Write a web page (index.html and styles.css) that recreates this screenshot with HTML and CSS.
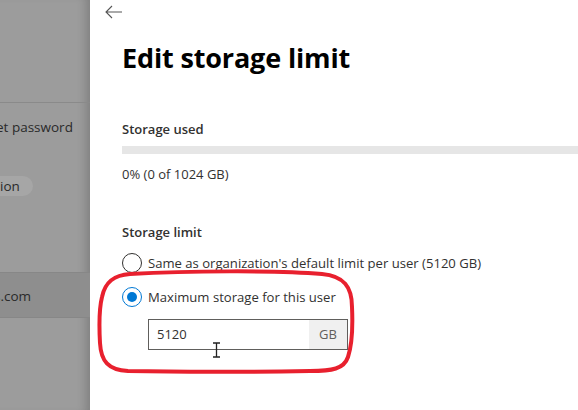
FILE: index.html
```html
<!DOCTYPE html>
<html>
<head>
<meta charset="utf-8">
<link rel="stylesheet" href="styles.css">
</head>
<body>
<div class="screen">
  <aside class="backdrop">
    <div class="bd-top"></div>
    <div class="bd-item bd-pass">et password</div>
    <div class="bd-pill">ion</div>
    <div class="bd-row">s.com</div>
  </aside>
  <main class="panel">
    <button class="back" aria-label="Back">
      <svg width="18" height="14" viewBox="0 0 18 14"><path d="M7 1 L1 7 L7 13 M1 7 H17" fill="none" stroke="#555" stroke-width="1.1"/></svg>
    </button>
    <h1 class="title">Edit storage limit</h1>
    <section class="used">
      <h2 class="label">Storage used</h2>
      <div class="bar"></div>
      <p class="pct">0% (0 of 1024 GB)</p>
    </section>
    <section class="limit">
      <h2 class="label">Storage limit</h2>
      <div class="radio-row">
        <span class="radio"></span>
        <span class="rtext">Same as organization's default limit per user (5120 GB)</span>
      </div>
      <div class="radio-row">
        <span class="radio checked"></span>
        <span class="rtext">Maximum storage for this user</span>
      </div>
      <div class="field">
        <span class="fval">5120</span>
        <span class="fsuffix">GB</span>
      </div>
    </section>
    <svg class="annot" width="262" height="110" viewBox="0 0 262 110">
      <path d="M34 5 C90 2 180 1 226 5 C248 7 256 18 256 38 C257 60 256 76 252 88 C248 100 236 102 214 102 C150 103 80 103 32 102 C12 101 5 92 4 74 C3 56 3 40 6 28 C9 13 18 6 34 5 Z" fill="none" stroke="#e8202e" stroke-width="4"/>
    </svg>
    <svg class="ibeam" width="9" height="16" viewBox="0 0 9 16"><path d="M1 1 H8 M4.5 1 V15 M1 15 H8" stroke="#222" stroke-width="1.3" fill="none"/></svg>
  </main>
</div>
</body>
</html>
```
FILE: styles.css
```css
* { box-sizing: border-box; }
html, body { margin: 0; padding: 0; }
body { width: 578px; height: 410px; overflow: hidden; font-family: "Open Sans", "Noto Sans", sans-serif; background: #fff; }
.screen { display: flex; width: 578px; height: 410px; }
.backdrop {
  width: 90px; flex: none; background: #9c9c9c; color: #2a2a2a; font-size: 13.5px;
  display: flex; flex-direction: column; position: relative; overflow: hidden;
  box-shadow: inset -10px 0 10px -6px rgba(0,0,0,0.18);
}
.bd-top { height: 103px; border-bottom: 1px solid #8a8a8a; flex: none; }
.bd-pass { margin-top: 14px; height: 20px; line-height: 20px; margin-left: -4px; white-space: nowrap; }
.bd-pill { margin-top: 39px; width: 33px; height: 20px; line-height: 20px; background: #a6a6a6; border-radius: 0 10px 10px 0; overflow: hidden; }
.bd-row { margin-top: 76px; height: 46px; line-height: 46px; background: #8e8e8e; border-top: 1px solid #878787; border-bottom: 1px solid #878787; white-space: nowrap; margin-left: -6px; padding-left: 0; }
.panel { flex: 1; position: relative; padding: 0 0 0 32px; color: #323130; }
.back { background: none; border: 0; padding: 0; margin: 5px 0 0 -17px; width: 18px; height: 14px; display: block; }
.back svg { display: block; }
.title { margin: 21px 0 0; font-size: 27px; font-weight: 700; color: #000; line-height: 36px; letter-spacing: -0.15px; }
.label { margin: 0; font-size: 13px; font-weight: 600; line-height: 20px; color: #323130; }
.used { margin-top: 43px; }
.bar { margin-top: 7px; height: 8px; background: #e6e6e6; }
.pct { margin: 10px 0 0; font-size: 13px; line-height: 20px; color: #323130; }
.limit { margin-top: 38px; }
.radio-row { display: flex; align-items: center; gap: 6px; margin-top: 8px; height: 26px; font-size: 13.1px; }
.radio-row + .radio-row { margin-top: 8px; }
.radio { width: 20px; height: 20px; border: 1px solid #323130; border-radius: 50%; flex: none; position: relative; }
.radio.checked { border-color: #0078d4; }
.radio.checked::after { content: ""; position: absolute; left: 4px; top: 4px; width: 10px; height: 10px; border-radius: 50%; background: #0078d4; }
.rtext { white-space: nowrap; }
.field { margin: 9px 0 0 26px; width: 200px; height: 31px; border: 1px solid #605e5c; display: flex; font-size: 13px; }
.fval { flex: 1; padding-left: 8px; line-height: 29px; color: #323130; }
.fsuffix { width: 38px; background: #f0f0f0; text-align: center; line-height: 29px; color: #605e5c; }
.annot { position: absolute; left: 6px; top: 269px; }
.ibeam { position: absolute; left: 122px; top: 342px; }
```
